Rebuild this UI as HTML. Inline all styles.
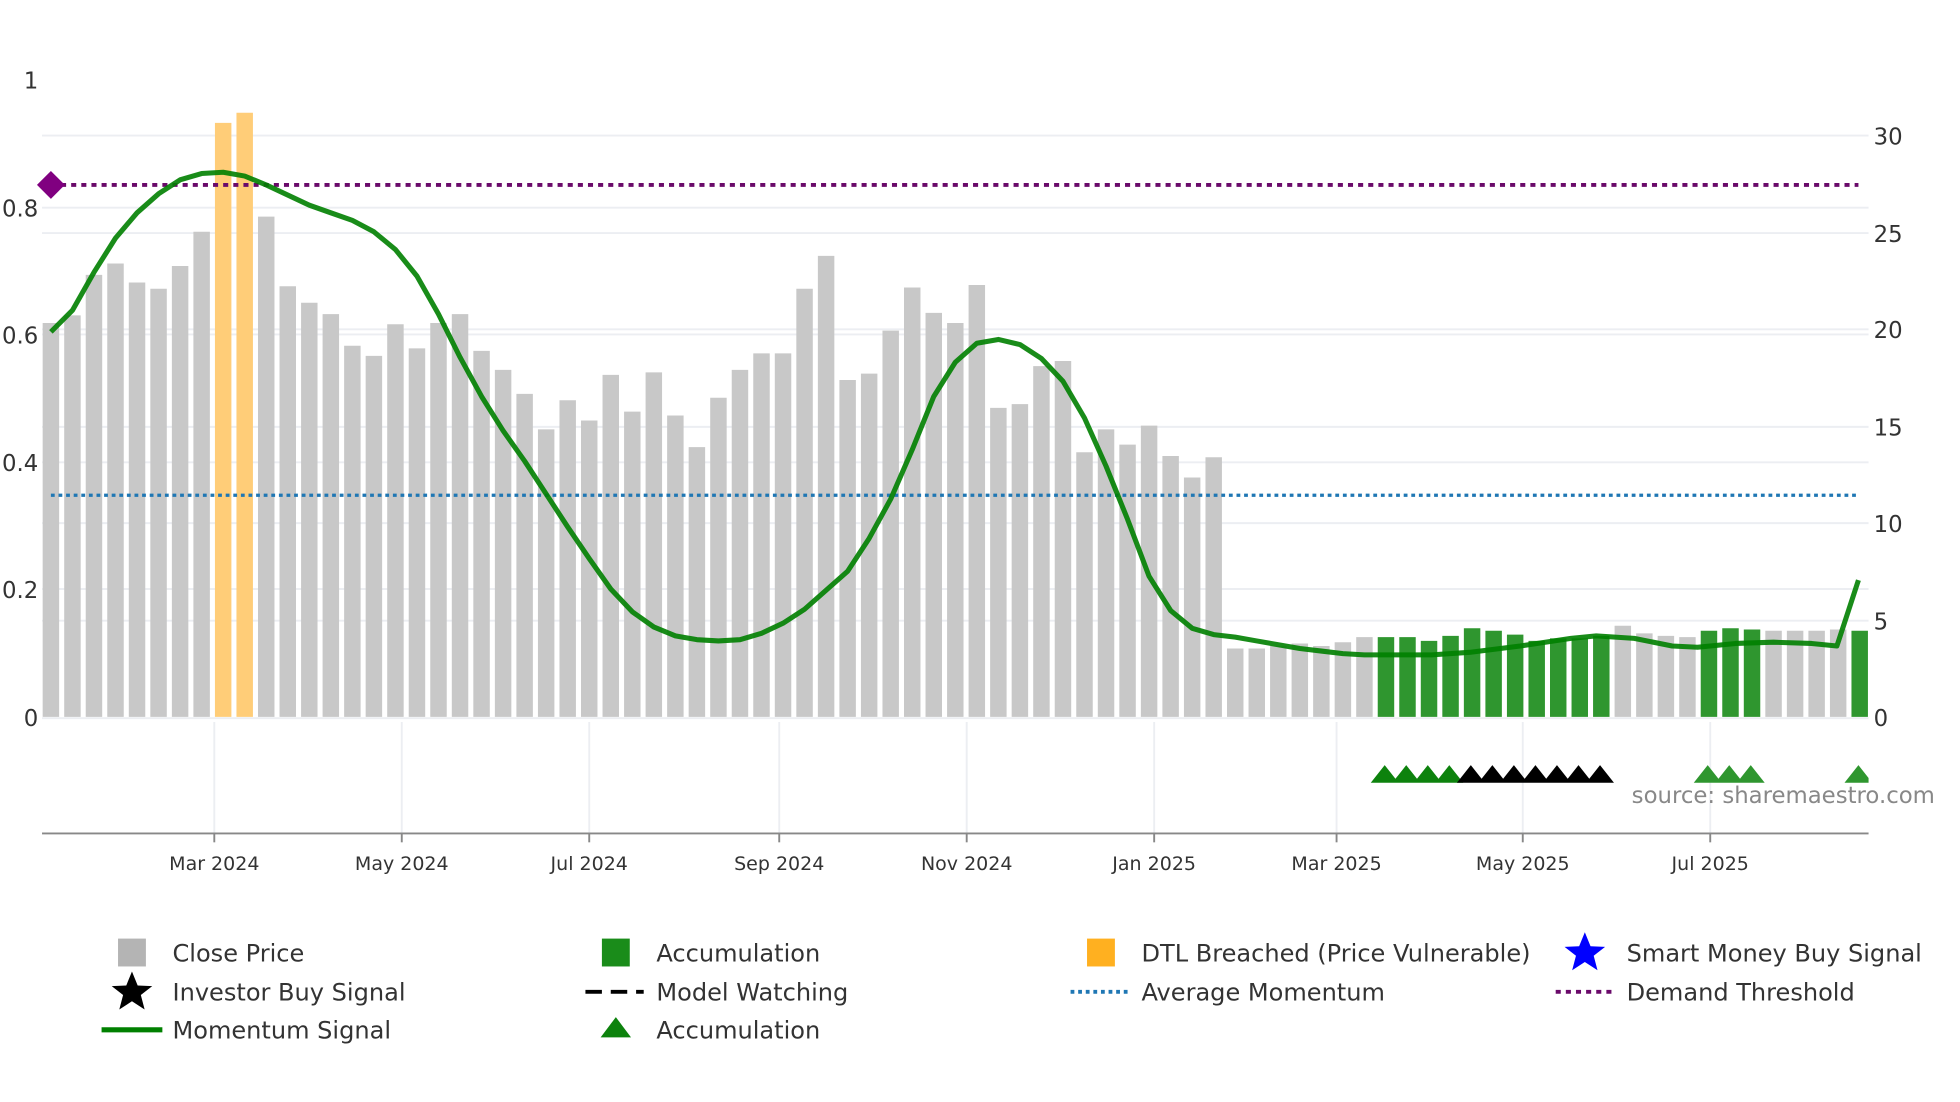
<!DOCTYPE html>
<html><head><meta charset="utf-8"><style>
html,body{margin:0;padding:0;background:#fff;}
svg{display:block;font-family:"DejaVu Sans","Liberation Sans",sans-serif;}
</style></head><body>
<svg width="1960" height="1102" viewBox="0 0 1547 870" xmlns="http://www.w3.org/2000/svg">
<g stroke="#eceef2" stroke-width="1.5">
<line x1="33" x2="1475" y1="107" y2="107"/><line x1="33" x2="1475" y1="184" y2="184"/><line x1="33" x2="1475" y1="260" y2="260"/><line x1="33" x2="1475" y1="337" y2="337"/><line x1="33" x2="1475" y1="413" y2="413"/><line x1="33" x2="1475" y1="490" y2="490"/>
<line x1="33" x2="1475" y1="164" y2="164"/><line x1="33" x2="1475" y1="264" y2="264"/><line x1="33" x2="1475" y1="365" y2="365"/><line x1="33" x2="1475" y1="465" y2="465"/>
<line x1="33" x2="1475" y1="567" y2="567"/>
<line x1="169" x2="169" y1="570" y2="658"/><line x1="317" x2="317" y1="570" y2="658"/><line x1="465" x2="465" y1="570" y2="658"/><line x1="615" x2="615" y1="570" y2="658"/><line x1="763" x2="763" y1="570" y2="658"/><line x1="911" x2="911" y1="570" y2="658"/><line x1="1055" x2="1055" y1="570" y2="658"/><line x1="1202" x2="1202" y1="570" y2="658"/><line x1="1350" x2="1350" y1="570" y2="658"/>
</g>
<path fill="none" stroke="#c8c8c8" stroke-width="13" d="M40 566V255M57 566V249M74 566V217M91 566V208M108 566V223M125 566V228M142 566V210M159 566V183M210 566V171M227 566V226M244 566V239M261 566V248M278 566V273M295 566V281M312 566V256M329 566V275M346 566V255M363 566V248M380 566V277M397 566V292M414 566V311M431 566V339M448 566V316M465 566V332M482 566V296M499 566V325M516 566V294M533 566V328M550 566V353M567 566V314M584 566V292M601 566V279M618 566V279M635 566V228M652 566V202M669 566V300M686 566V295M703 566V261M720 566V227M737 566V247M754 566V255M771 566V225M788 566V322M805 566V319M822 566V289M839 566V285M856 566V357M873 566V339M890 566V351M907 566V336M924 566V360M941 566V377M958 566V361M975 566V512M992 566V512M1009 566V510M1026 566V508M1043 566V510M1060 566V507M1077 566V503M1281 566V494M1298 566V500M1315 566V502M1332 566V503M1400 566V498M1417 566V498M1434 566V498M1451 566V497"/>
<path fill="none" stroke="#ffcd78" stroke-width="13" d="M176 566V97M193 566V89"/>
<path fill="none" stroke="#2f962f" stroke-width="13" d="M1094 566V503M1111 566V503M1128 566V506M1145 566V502M1162 566V496M1179 566V498M1196 566V501M1213 566V506M1230 566V504M1247 566V504M1264 566V502M1349 566V498M1366 566V496M1383 566V497M1468 566V498"/>
<line x1="40" x2="1467" y1="391" y2="391" stroke="#1f77b4" stroke-width="2.5" stroke-dasharray="3,3"/>
<line x1="40" x2="1467" y1="146" y2="146" stroke="#6a0a6a" stroke-width="3" stroke-dasharray="4,4"/>
<path d="M40 135 L51 146 L40 157 L29 146 Z" fill="#800080"/>
<path fill="none" stroke="#008000" stroke-width="4" stroke-linejoin="round" opacity="0.9" d="M40 262 L57 245 L74 215 L91 188 L108 168 L125 153 L142 142 L159 137 L176 136 L193 139 L210 146 L227 154 L244 162 L261 168 L278 174 L295 183 L312 197 L329 218 L346 248 L363 282 L380 313 L397 340 L414 364 L431 390 L448 416 L465 441 L482 465 L499 483 L516 495 L533 502 L550 505 L567 506 L584 505 L601 500 L618 492 L635 481 L652 466 L669 451 L686 425 L703 394 L720 355 L737 313 L754 286 L771 271 L788 268 L805 272 L822 283 L839 301 L856 330 L873 368 L890 410 L907 455 L924 482 L941 496 L958 501 L975 503 L992 506 L1009 509 L1026 512 L1043 514 L1060 516 L1077 517 L1094 517 L1130 517 L1160 515 L1200 510 L1240 504 L1260 502 L1290 504 L1320 510 L1340 511 L1370 508 L1400 507 L1430 508 L1450 510 L1467 458"/>
<path fill="#0d820d" d="M1082 618L1093 604L1104 618ZM1099 618L1110 604L1121 618ZM1116 618L1127 604L1138 618ZM1133 618L1144 604L1155 618Z"/>
<path fill="#000" d="M1150 618L1161 604L1172 618ZM1167 618L1178 604L1189 618ZM1184 618L1195 604L1206 618ZM1201 618L1212 604L1223 618ZM1218 618L1229 604L1240 618ZM1235 618L1246 604L1257 618ZM1252 618L1263 604L1274 618Z"/>
<path fill="#2f962f" d="M1337 618L1348 604L1359 618ZM1354 618L1365 604L1376 618ZM1371 618L1382 604L1393 618ZM1456 618L1467 604L1475 614.2L1475 618Z"/>
<line x1="33" x2="1475" y1="658" y2="658" stroke="#888" stroke-width="1.5"/>
<g stroke="#888" stroke-width="1.5">
<line x1="169" x2="169" y1="658" y2="665"/><line x1="317" x2="317" y1="658" y2="665"/><line x1="465" x2="465" y1="658" y2="665"/><line x1="615" x2="615" y1="658" y2="665"/><line x1="763" x2="763" y1="658" y2="665"/><line x1="911" x2="911" y1="658" y2="665"/><line x1="1055" x2="1055" y1="658" y2="665"/><line x1="1202" x2="1202" y1="658" y2="665"/><line x1="1350" x2="1350" y1="658" y2="665"/>
</g>
<g font-size="18" fill="#333">
<text x="30" y="70" text-anchor="end">1</text>
<text x="30" y="171" text-anchor="end">0.8</text>
<text x="30" y="271" text-anchor="end">0.6</text>
<text x="30" y="372" text-anchor="end">0.4</text>
<text x="30" y="472" text-anchor="end">0.2</text>
<text x="30" y="573" text-anchor="end">0</text>
<text x="1479" y="114">30</text><text x="1479" y="191">25</text><text x="1479" y="267">20</text><text x="1479" y="344">15</text><text x="1479" y="420">10</text><text x="1479" y="497">5</text><text x="1479" y="573">0</text>
</g>
<text x="1288" y="634" font-size="18" fill="#888">source: sharemaestro.com</text>
<g font-size="15" fill="#333" text-anchor="middle">
<text x="169" y="687">Mar 2024</text><text x="317" y="687">May 2024</text><text x="465" y="687">Jul 2024</text><text x="615" y="687">Sep 2024</text><text x="763" y="687">Nov 2024</text><text x="911" y="687">Jan 2025</text><text x="1055" y="687">Mar 2025</text><text x="1202" y="687">May 2025</text><text x="1350" y="687">Jul 2025</text>
</g>
<g font-size="19" fill="#333">
<rect x="93" y="741" width="22" height="22" fill="#b4b4b4"/><text x="136" y="759">Close Price</text>
<rect x="475" y="741" width="22" height="22" fill="#1a8c1a"/><text x="518" y="759">Accumulation</text>
<rect x="858" y="741" width="22" height="22" fill="#ffb020"/><text x="901" y="759">DTL Breached (Price Vulnerable)</text>
<path d="M1251 736 L1255.5 747 L1267 747.5 L1258 754.5 L1261 766 L1251 759.5 L1241 766 L1244 754.5 L1235 747.5 L1246.5 747 Z" fill="#0000ff"/><text x="1284" y="759">Smart Money Buy Signal</text>
<path d="M104 767 L108.5 778 L120 778.5 L111 785.5 L114 797 L104 790.5 L94 797 L97 785.5 L88 778.5 L99.5 778 Z" fill="#000"/><text x="136" y="790">Investor Buy Signal</text>
<line x1="462" x2="508" y1="783" y2="783" stroke="#000" stroke-width="3" stroke-dasharray="13,7"/><text x="518" y="790">Model Watching</text>
<line x1="845" x2="891" y1="783" y2="783" stroke="#1f77b4" stroke-width="3" stroke-dasharray="3,3"/><text x="901" y="790">Average Momentum</text>
<line x1="1228" x2="1274" y1="783" y2="783" stroke="#6a0a6a" stroke-width="3" stroke-dasharray="4,4"/><text x="1284" y="790">Demand Threshold</text>
<line x1="80" x2="128" y1="813" y2="813" stroke="#008000" stroke-width="4"/><text x="136" y="820">Momentum Signal</text>
<path d="M474 819 L486 803 L498 819 Z" fill="#0d820d"/><text x="518" y="820">Accumulation</text>
</g>
</svg>
</body></html>
